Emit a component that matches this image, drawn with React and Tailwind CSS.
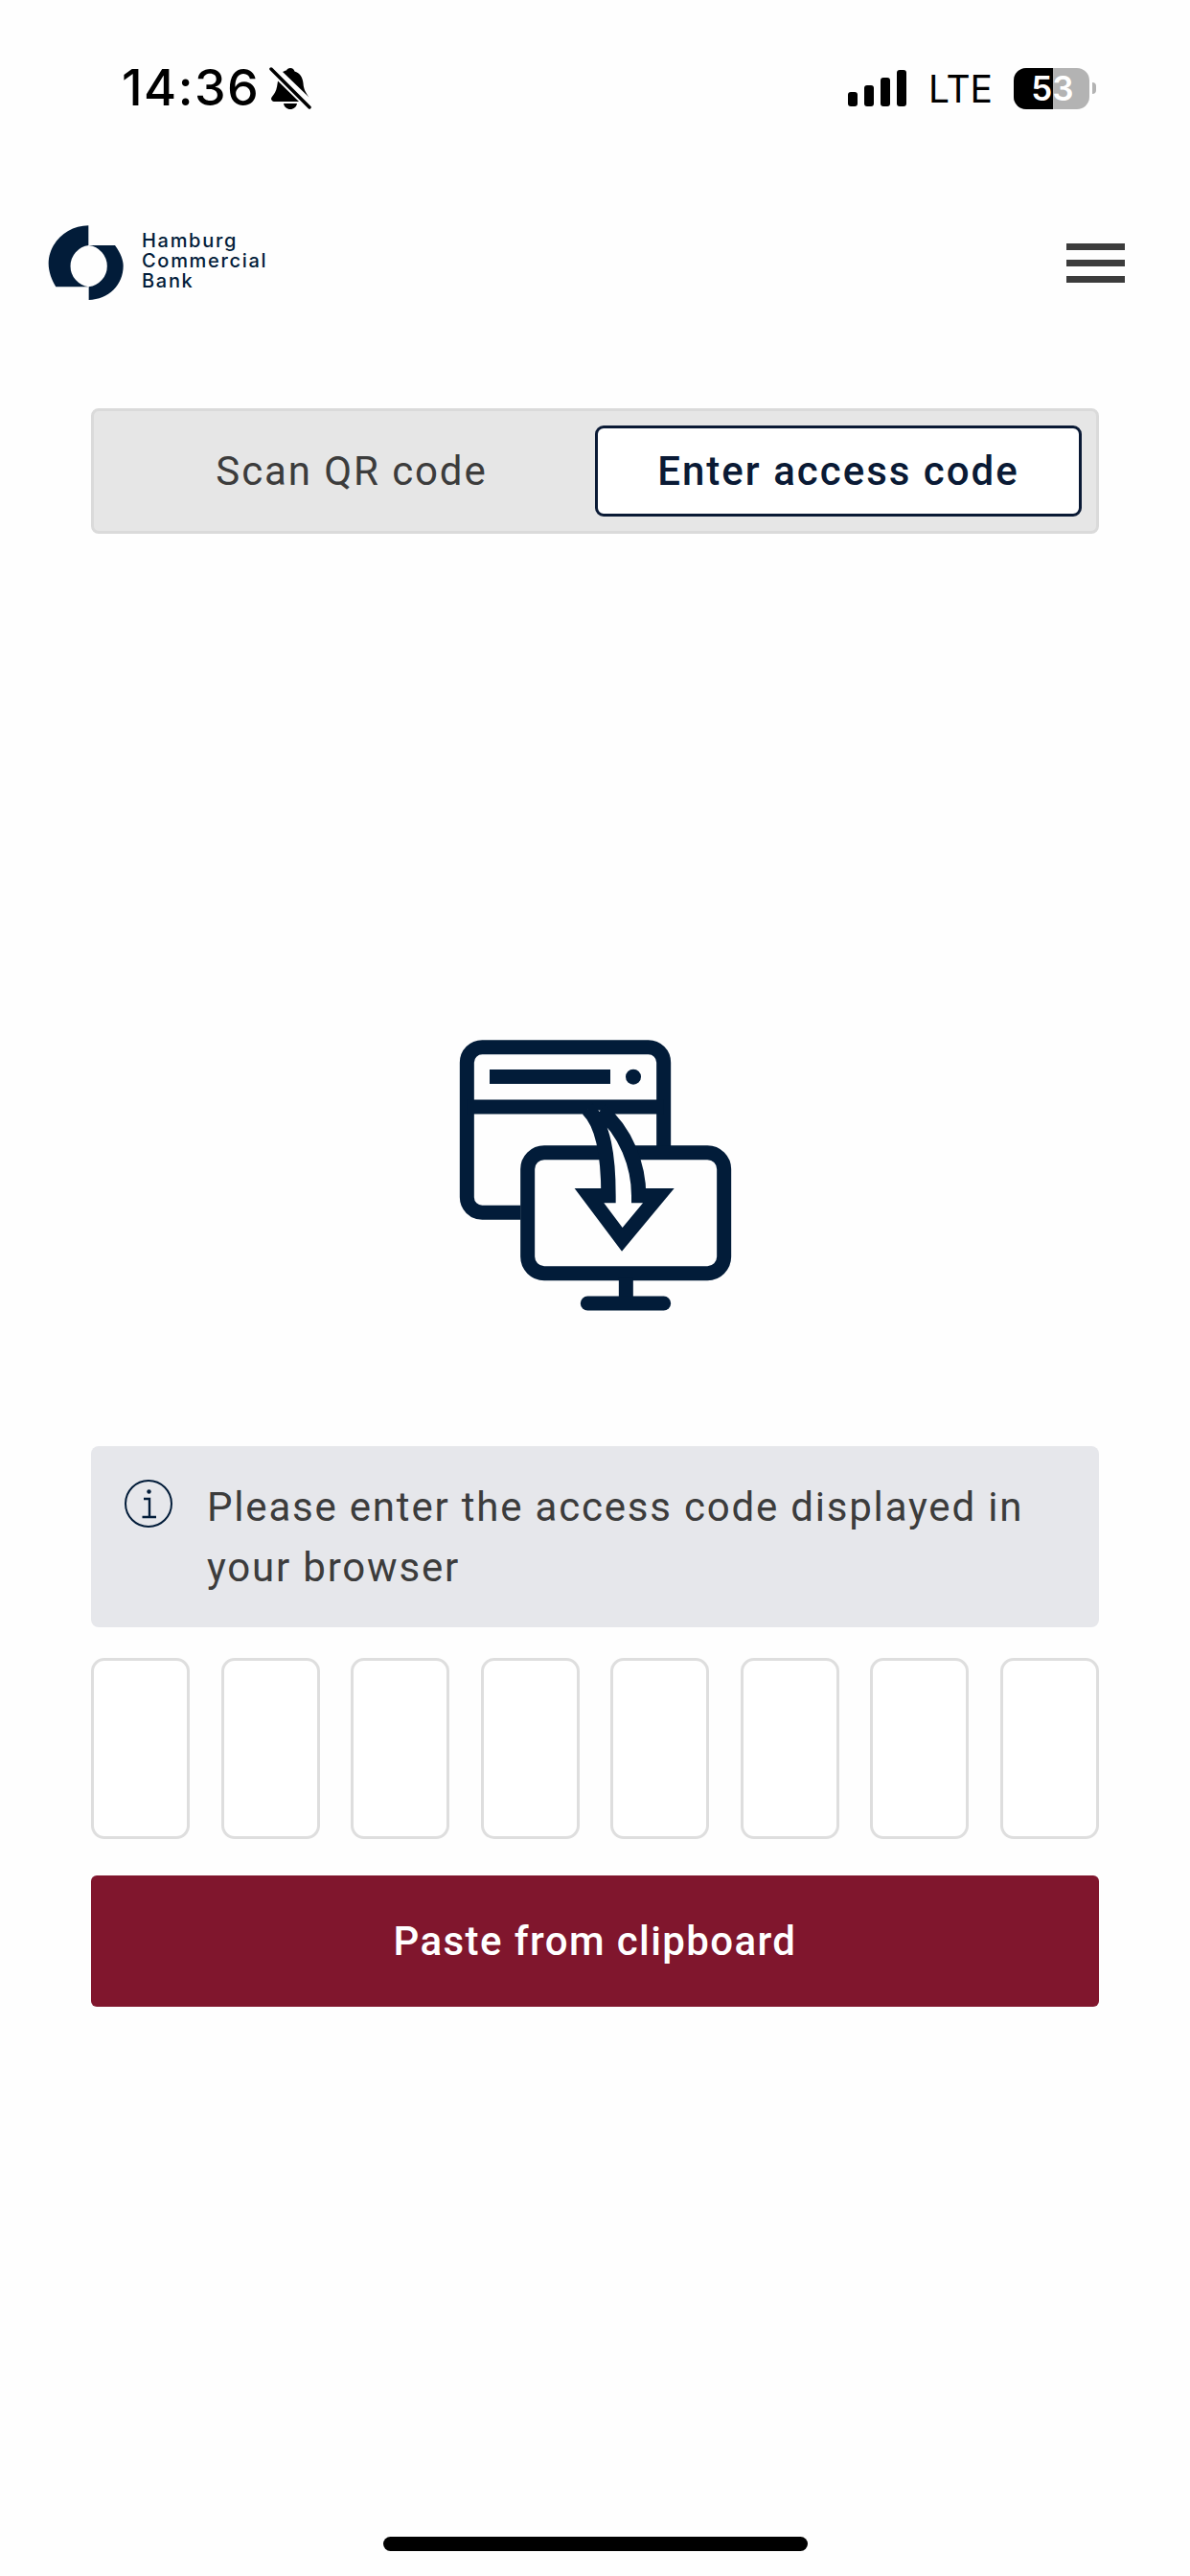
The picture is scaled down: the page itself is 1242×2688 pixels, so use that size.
const NAVY = "#021c39";

function Bell() {
  return (
    <svg width="44" height="46" viewBox="0 0 44 46" className="ml-[10px]">
      <path d="M22 2c2.500 0 4 1.600 4.500 3.500C32 7 35 12 35.500 18c.4 6 2.500 9.500 6 14.500L14 6c1.500-.8 3-1.500 4-1.500C18.500 3 20 2 22 2zM9 15.500 31 37H5c-1.500 0-3-1.500-3-3 0-1.500 2.500-3.500 4-6.500C8 24 8.500 19 9 15.500zM15 39h14c-.5 3.500-3.500 6-7 6s-6.500-2.500-7-6z" fill="#000" />
      <path d="M2 3 42 43" stroke="#000" strokeWidth="3.500" strokeLinecap="round" />
    </svg>
  );
}

function Signal() {
  return (
    <div className="flex items-end gap-[7px] h-[38px]">
      <div className="w-[10px] h-[15px] rounded-[3px] bg-black" />
      <div className="w-[10px] h-[22px] rounded-[3px] bg-black" />
      <div className="w-[10px] h-[30px] rounded-[3px] bg-black" />
      <div className="w-[10px] h-[38px] rounded-[3px] bg-black" />
    </div>
  );
}

function Battery() {
  return (
    <div className="flex items-center">
      <div className="relative flex w-[79px] h-[43px] rounded-[13px] overflow-hidden bg-[#b3b3b3]">
        <div className="w-[41px] h-full bg-black" />
        <div className="absolute inset-0 flex items-center justify-center text-white text-[35px] font-semibold leading-none font-['Inter',sans-serif] pl-[2px]">
          53
        </div>
      </div>
      <div className="w-[4px] h-[12px] ml-[3px] rounded-r-[4px] bg-[#b3b3b3]" />
    </div>
  );
}

function Logo() {
  return (
    <div className="flex items-center">
      <svg width="80" height="81" viewBox="150 582 240 243" className="shrink-0">
        <path d="M277 586C210 586 152 640 152 705C152 730 162 757 175 778H278A65.500 65.500 0 0 1 278 648H277Z" fill={NAVY} />
        <path d="M278 648H360C378 672 386 695 386 712C386 772 340 818 278 819V778A65.500 65.500 0 0 0 278 648Z" fill={NAVY} />
      </svg>
      <div className="ml-[18px] -mt-[3px] text-[20px] leading-[21px] font-medium tracking-[1.7px] text-[#021c39] font-['Inter',sans-serif]">
        <div>Hamburg</div>
        <div>Commercial</div>
        <div>Bank</div>
      </div>
    </div>
  );
}

function TransferIcon() {
  return (
    <svg width="340" height="320" viewBox="0 0 1020 960" className="block">
      <g fill="none" stroke={NAVY} strokeWidth="45">
        <path d="M280 616H160a48 48 0 0 1-48-48V146a48 48 0 0 1 48-48H680a48 48 0 0 1 48 48V420" />
        <path d="M112 285H728" />
        <rect x="302" y="428" width="615" height="378" rx="52" />
        <path d="M610 820V900" />
        <path d="M490 900H728" strokeLinecap="round" />
      </g>
      <rect x="183" y="168" width="378" height="45" fill={NAVY} />
      <circle cx="633" cy="191" r="24" fill={NAVY} />
      <path
        d="M490 292C540 340 555 440 555 563H495L598 700 712 563H650C650 470 610 360 530 296"
        fill="#fff"
        stroke={NAVY}
        strokeWidth="46"
        strokeLinejoin="miter"
      />
    </svg>
  );
}

function InfoIcon() {
  return (
    <svg width="50" height="50" viewBox="0 0 50 50" className="shrink-0">
      <circle cx="25" cy="25" r="24" fill="none" stroke={NAVY} strokeWidth="2" />
      <circle cx="25.500" cy="12.500" r="2.200" fill={NAVY} />
      <path d="M20 20H26V39M18.500 39H33" fill="none" stroke={NAVY} strokeWidth="2.400" />
    </svg>
  );
}

export default function App() {
  return (
    <div className="w-[1242px] h-[2688px] bg-[#fefefe] flex flex-col overflow-hidden font-['Roboto',sans-serif]">
      <div className="mt-[60px] h-[64px] flex items-center justify-between pl-[127px] pr-[98px] shrink-0">
        <div className="flex items-center">
          <span className="text-[52px] leading-none font-medium tracking-[1.5px] text-black font-['Inter',sans-serif]">14:36</span>
          <Bell />
        </div>
        <div className="flex items-center">
          <Signal />
          <span className="ml-[23px] mr-[22px] text-[39px] leading-none text-black font-['Inter',sans-serif]">LTE</span>
          <Battery />
        </div>
      </div>

      <div className="mt-[109px] h-[82px] flex items-center justify-between pl-[50px] pr-[68px] shrink-0">
        <Logo />
        <div className="flex flex-col gap-[10px]">
          <div className="w-[61px] h-[7px] bg-[#3c3c3c]" />
          <div className="w-[61px] h-[7px] bg-[#3c3c3c]" />
          <div className="w-[61px] h-[7px] bg-[#3c3c3c]" />
        </div>
      </div>

      <div className="mt-[111px] mx-[95px] h-[131px] flex items-center border-[3px] border-[#dadada] rounded-[8px] bg-[#e6e6e6] p-[15px] shrink-0">
        <div className="flex-1 text-center text-[42px] tracking-[1.9px] text-[#3c3c3c]">Scan QR code</div>
        <div className="w-[508px] h-[95px] flex items-center justify-center bg-white border-[3px] border-[#0a1a35] rounded-[9px] text-[42px] font-medium tracking-[2px] text-[#0a1a35]">
          Enter access code
        </div>
      </div>

      <div className="mt-[503px] ml-[450px] shrink-0">
        <TransferIcon />
      </div>

      <div className="mt-[129px] mx-[95px] h-[189px] flex items-start rounded-[8px] bg-[#e6e7eb] pl-[35px] pt-[35px] shrink-0">
        <InfoIcon />
        <p className="ml-[36px] -mt-[3px] text-[42px] leading-[63px] tracking-[1.8px] text-[#3c3c3c]">
          Please enter the access code displayed in
          <br />
          your browser
        </p>
      </div>

      <div className="mt-[32px] mx-[95px] flex justify-between shrink-0">
        {[0, 1, 2, 3, 4, 5, 6, 7].map((i) => (
          <div key={i} className="w-[103px] h-[189px] border-[3px] border-[#dedede] rounded-[14px] bg-white" />
        ))}
      </div>

      <div className="mt-[38px] mx-[95px] h-[137px] flex items-center justify-center rounded-[6px] bg-[#80162d] text-[42px] font-medium tracking-[1.4px] text-white shrink-0">
        Paste from clipboard
      </div>

      <div className="mt-[553px] ml-[400px] w-[443px] h-[15px] rounded-full bg-black shrink-0" />
    </div>
  );
}
